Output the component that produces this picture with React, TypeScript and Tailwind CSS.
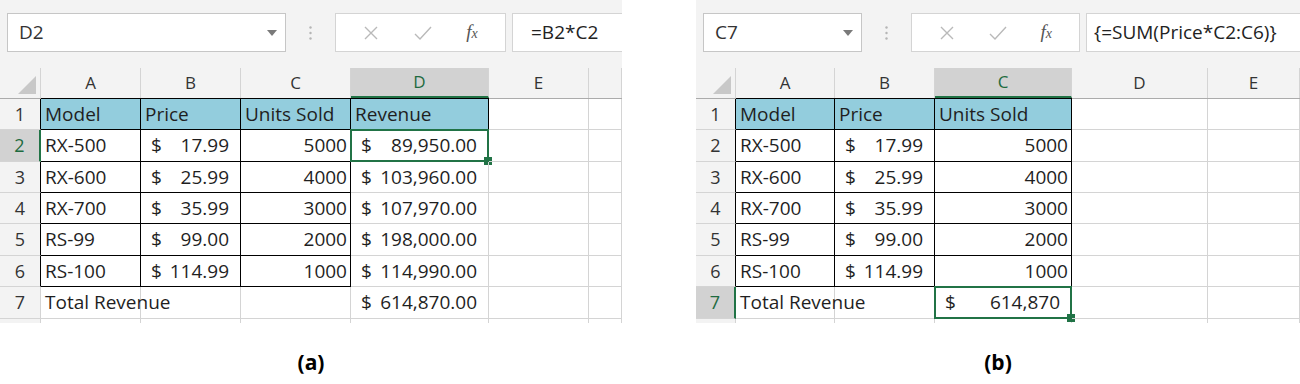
import React from "react";

type Cell = { text?: string; align?: "left" | "right"; money?: string; header?: boolean; table?: boolean };

type Sheet = {
  name: string;
  formula: string;
  formulaPad: number;
  nameW: number;
  btnW: number;
  cols: { label: string; w: number }[];
  rows: Cell[][];
  sel: [number, number];
  width: number;
};

const ROW_H = [31, 32, 31, 31, 32, 31, 32];
const FONT = { fontFamily: "'Open Sans', 'Noto Sans', sans-serif" };

const t = (text: string): Cell => ({ text, align: "left", table: true });
const h = (text: string): Cell => ({ text, align: "left", header: true, table: true });
const n = (text: string): Cell => ({ text, align: "right", table: true });
const m = (money: string, table = true): Cell => ({ money, table });
const e: Cell = {};

const left: Sheet = {
  name: "D2",
  formula: "=B2*C2",
  formulaPad: 18,
  nameW: 279,
  btnW: 171,
  width: 622,
  cols: [
    { label: "", w: 41 },
    { label: "A", w: 100 },
    { label: "B", w: 100 },
    { label: "C", w: 110 },
    { label: "D", w: 138 },
    { label: "E", w: 100 },
    { label: "", w: 33 },
  ],
  rows: [
    [h("Model"), h("Price"), h("Units Sold"), h("Revenue"), e, e],
    [t("RX-500"), m("17.99"), n("5000"), m("89,950.00", false), e, e],
    [t("RX-600"), m("25.99"), n("4000"), m("103,960.00", false), e, e],
    [t("RX-700"), m("35.99"), n("3000"), m("107,970.00", false), e, e],
    [t("RS-99"), m("99.00"), n("2000"), m("198,000.00", false), e, e],
    [t("RS-100"), m("114.99"), n("1000"), m("114,990.00", false), e, e],
    [{ text: "Total Revenue", align: "left" }, e, e, m("614,870.00", false), e, e],
  ],
  sel: [1, 3],
};

const right: Sheet = {
  name: "C7",
  formula: "{=SUM(Price*C2:C6)}",
  formulaPad: 7,
  nameW: 159,
  btnW: 169,
  width: 604,
  cols: [
    { label: "", w: 40 },
    { label: "A", w: 99 },
    { label: "B", w: 100 },
    { label: "C", w: 137 },
    { label: "D", w: 136 },
    { label: "E", w: 92 },
  ],
  rows: [
    [h("Model"), h("Price"), h("Units Sold"), e, e],
    [t("RX-500"), m("17.99"), n("5000"), e, e],
    [t("RX-600"), m("25.99"), n("4000"), e, e],
    [t("RX-700"), m("35.99"), n("3000"), e, e],
    [t("RS-99"), m("99.00"), n("2000"), e, e],
    [t("RS-100"), m("114.99"), n("1000"), e, e],
    [{ text: "Total Revenue", align: "left" }, e, m("614,870", false), e, e],
  ],
  sel: [6, 2],
};

function FormulaBar({ s }: { s: Sheet }) {
  return (
    <div className="h-[68px] bg-[#f3f3f3] flex items-start pt-[13px] pl-[7px]" style={FONT}>
      <div
        className="h-[39px] bg-white border border-[#c6c6c6] flex items-center justify-between pl-[11px] pr-[8px]"
        style={{ width: s.nameW }}
      >
        <span className="text-[19px] text-[#333]">{s.name}</span>
        <svg width="10" height="6" viewBox="0 0 10 6">
          <path d="M0 0h10L5 6z" fill="#7a7a7a" />
        </svg>
      </div>
      <div className="w-[49px] h-[39px] flex items-center justify-center">
        <svg width="3" height="14" viewBox="0 0 3 14">
          <circle cx="1.5" cy="1.5" r="1.2" fill="#b5b5b5" />
          <circle cx="1.5" cy="7" r="1.2" fill="#b5b5b5" />
          <circle cx="1.5" cy="12.5" r="1.2" fill="#b5b5b5" />
        </svg>
      </div>
      <div
        className="h-[39px] bg-white border border-[#d4d4d4] flex items-center justify-around px-[10px]"
        style={{ width: s.btnW }}
      >
        <svg width="16" height="16" viewBox="0 0 16 16">
          <path d="M2 2l12 12M14 2L2 14" stroke="#b9b9b9" strokeWidth="1.4" />
        </svg>
        <svg width="18" height="16" viewBox="0 0 18 16">
          <path d="M1 9l5 5L17 2" stroke="#b9b9b9" strokeWidth="1.4" fill="none" />
        </svg>
        <span className="italic text-[19px] text-[#555]" style={{ fontFamily: "'Liberation Serif', serif" }}>
          f<span className="text-[14px]">x</span>
        </span>
      </div>
      <div
        className="flex-1 h-[39px] bg-white border border-[#d4d4d4] border-r-0 ml-[6px] flex items-center"
        style={{ paddingLeft: s.formulaPad }}
      >
        <span className="text-[19px] text-[#222] whitespace-nowrap">{s.formula}</span>
      </div>
    </div>
  );
}

function inTable(s: Sheet, r: number, c: number) {
  const row = s.rows[r];
  if (!row) return false;
  const cell = row[c];
  return !!cell && !!cell.table;
}

function SheetGrid({ s }: { s: Sheet }) {
  const [sr, sc] = s.sel;
  return (
    <div className="bg-white" style={FONT}>
      {/* column headers */}
      <div className="flex h-[31px] bg-[#f3f3f3] border-b border-[#ababab]">
        {s.cols.map((col, i) => {
          const selected = i - 1 === sc;
          return (
            <div
              key={i}
              className={
                "relative flex items-center justify-center text-[17px] border-r border-[#d4d4d4] " +
                (selected ? "bg-[#d2d2d2] text-[#1e6b40] border-b-2 border-b-[#217346]" : "text-[#333]")
              }
              style={{ width: col.w }}
            >
              {i === 0 ? (
                <svg className="absolute right-[4px] bottom-[4px]" width="18" height="18" viewBox="0 0 18 18">
                  <path d="M18 0v18H0z" fill="#c8c8c8" />
                </svg>
              ) : (
                col.label
              )}
            </div>
          );
        })}
      </div>
      {s.rows.map((row, r) => (
        <div key={r} className="flex" style={{ height: ROW_H[r] }}>
          <div
            className={
              "flex items-center justify-center text-[18px] border-b border-[#d4d4d4] " +
              (r === sr
                ? "bg-[#d2d2d2] text-[#1e6b40] border-r-2 border-r-[#217346]"
                : "bg-[#f3f3f3] text-[#333] border-r " + (inTable(s, r, 0) ? "border-r-black" : "border-r-[#d4d4d4]"))
            }
            style={{ width: s.cols[0].w }}
          >
            {r + 1}
          </div>
          {s.cols.slice(1).map((col, c) => {
            const cell = row[c] ?? e;
            const rb = inTable(s, r, c) || inTable(s, r, c + 1) ? "border-r-black" : "border-r-[#d4d4d4]";
            const bb = inTable(s, r, c) || inTable(s, r + 1, c) ? "border-b-black" : "border-b-[#d4d4d4]";
            const top = r === 0 && cell.table ? "border-t border-t-black -mt-px" : "";
            const isSel = r === sr && c === sc;
            return (
              <div
                key={c}
                className={
                  "relative border-r border-b flex items-center text-[19px] text-[#1f1f1f] whitespace-nowrap " +
                  rb + " " + bb + " " + top + " " +
                  (cell.header ? "bg-[#93cddd] " : "")
                }
                style={{ width: col.w }}
              >
                {cell.text && (
                  <span className={cell.align === "right" ? "ml-auto pr-[3px]" : "pl-[4px]"}>{cell.text}</span>
                )}
                {cell.money && (
                  <div className="flex w-full justify-between pl-[10px] pr-[11px]">
                    <span>$</span>
                    <span>{cell.money}</span>
                  </div>
                )}
                {isSel && (
                  <div className="absolute -left-px -top-px -right-px -bottom-px border-2 border-[#217346] pointer-events-none">
                    <div className="absolute -right-[5px] -bottom-[5px] w-[8px] h-[8px] bg-[#217346]" />
                  </div>
                )}
              </div>
            );
          })}
        </div>
      ))}
      {/* partial next row */}
      <div className="flex h-[4px]">
        {s.cols.map((col, i) => (
          <div
            key={i}
            className={"border-r border-[#d4d4d4] " + (i === 0 ? "bg-[#f3f3f3]" : "")}
            style={{ width: col.w }}
          />
        ))}
      </div>
    </div>
  );
}

function Panel({ s, caption }: { s: Sheet; caption: string }) {
  return (
    <div className="flex flex-col" style={{ width: s.width }}>
      <div className="overflow-hidden">
        <FormulaBar s={s} />
        <SheetGrid s={s} />
      </div>
      <div
        className="text-center text-[21px] font-bold text-black mt-[24px]"
        style={{ fontFamily: "'Open Sans', sans-serif" }}
      >
        {caption}
      </div>
    </div>
  );
}

export default function App() {
  return (
    <div className="w-[1300px] h-[384px] bg-white flex gap-[74px] overflow-hidden">
      <Panel s={left} caption="(a)" />
      <Panel s={right} caption="(b)" />
    </div>
  );
}
